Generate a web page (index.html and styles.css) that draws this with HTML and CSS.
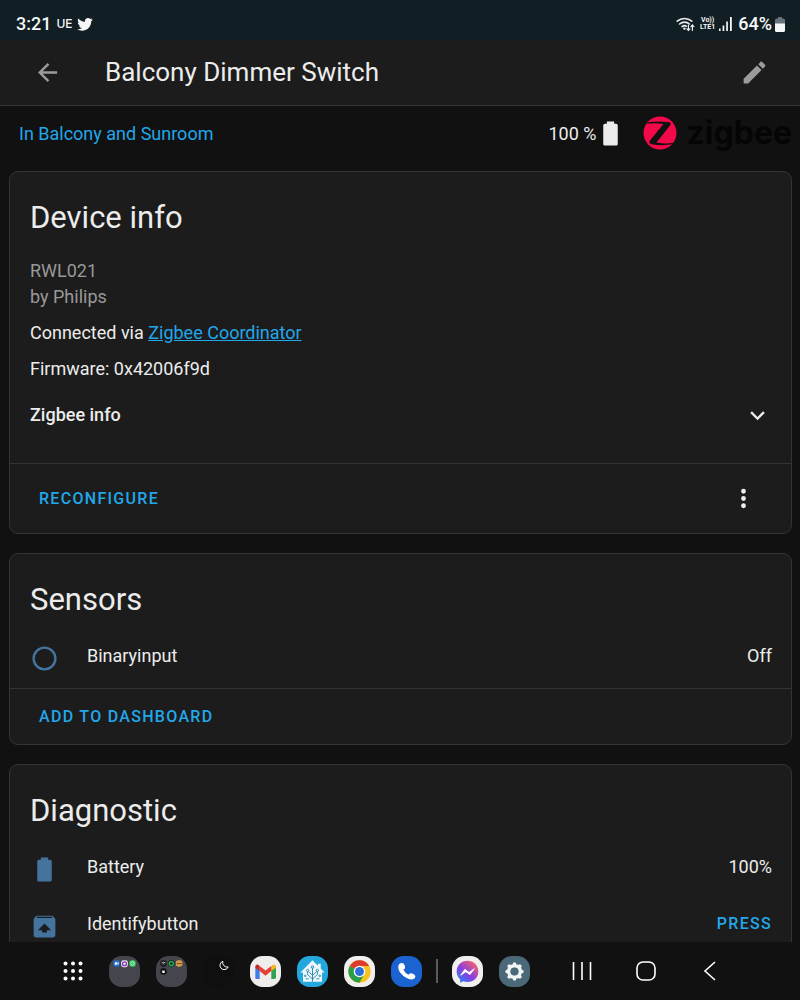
FILE: index.html
```
<!DOCTYPE html>
<html lang="en">

<head>
  <meta charset="UTF-8">
  <meta name="viewport" content="width=device-width, initial-scale=1.0">
  <title>Balcony Dimmer Switch</title>
  <link rel="stylesheet" href="styles.css">
</head>

<body>
  <!-- Status bar -->
  <div class="status-bar">
    <span class="clock">3:21</span>
    <span class="status-tag">UE</span>
    <svg class="bird" viewBox="0 0 24 24"><path d="M22.46 6c-.77.35-1.6.58-2.46.69.88-.53 1.56-1.37 1.88-2.38-.83.5-1.75.85-2.72 1.05C18.37 4.5 17.26 4 16 4c-2.35 0-4.27 1.92-4.27 4.29 0 .34.04.67.11.98C8.28 9.09 5.11 7.38 3 4.79c-.37.63-.58 1.37-.58 2.15 0 1.49.75 2.81 1.91 3.56-.71 0-1.37-.2-1.95-.5v.03c0 2.08 1.48 3.82 3.44 4.21a4.22 4.22 0 0 1-1.93.07 4.28 4.28 0 0 0 4 2.98 8.52 8.52 0 0 1-5.33 1.84c-.34 0-.68-.02-1.02-.06C3.44 20.29 5.7 21 8.12 21 16 21 20.33 14.46 20.33 8.79c0-.19 0-.37-.01-.56.84-.6 1.56-1.36 2.14-2.23z"/></svg>
    <div class="status-right">
      <svg class="wifi" viewBox="0 0 19 16">
        <g fill="none" stroke="#e9edee" stroke-width="1.6" stroke-linecap="round">
          <path d="M1.2 5.2a11 11 0 0 1 14.6 0M3.6 8a7.4 7.4 0 0 1 9.8 0M6 10.6a4 4 0 0 1 4.4-.4"/>
          <path d="M12.4 9v5M10.9 12.8l1.5 1.6 1.5-1.6M16.4 14.4V9.2M14.9 10.6l1.5-1.6 1.5 1.6" stroke-width="1.2"/>
        </g>
        <circle cx="8.4" cy="12.6" r="1.2"/>
      </svg>
      <span class="lte"><span>Vo))</span><span>LTE1</span></span>
      <svg class="signal" viewBox="0 0 13 14"><path d="M0 11.5h1.6V14H0zM3.6 8.5h1.7V14H3.6zM7.2 4.5h1.7V14H7.2zM11 0h1.8v14H11z"/></svg>
      <span class="percent">64%</span>
      <svg class="phone-battery" viewBox="0 0 10 15"><path d="M3 0h4v1.5h1.5A1.5 1.5 0 0 1 10 3v4H0V3a1.5 1.5 0 0 1 1.5-1.5H3z" fill="#68747a"/><path d="M0 6.5h10v7A1.5 1.5 0 0 1 8.5 15h-7A1.5 1.5 0 0 1 0 13.5z"/></svg>
    </div>
  </div>

  <header class="toolbar">
    <button class="icon-button" aria-label="Back"><svg class="icon" viewBox="0 0 24 24"><path d="M20,11V13H8L13.5,18.5L12.08,19.92L4.16,12L12.08,4.08L13.5,5.5L8,11H20Z"/></svg></button>
    <h1>Balcony Dimmer Switch</h1>
    <button class="icon-button" aria-label="Edit"><svg class="icon" viewBox="0 0 24 24"><path d="M20.71,7.04C21.1,6.65 21.1,6 20.71,5.63L18.37,3.29C18,2.9 17.35,2.9 16.96,3.29L15.12,5.12L18.87,8.87M3,17.25V21H6.75L17.81,9.93L14.06,6.18L3,17.25Z"/></svg></button>
  </header>

  <main>
    <div class="device-row">
      <a class="area-link" href="#area">In Balcony and Sunroom</a>
      <span class="battery-level">100 %
        <svg class="icon" viewBox="0 0 24 24"><path d="M16.67,4H15V2H9V4H7.33A1.33,1.33 0 0,0 6,5.33V20.67C6,21.4 6.6,22 7.33,22H16.67A1.33,1.33 0 0,0 18,20.67V5.33C18,4.6 17.4,4 16.67,4Z"/></svg>
      </span>
      <div class="brand">
        <svg class="brand-mark" viewBox="0 0 34 34">
          <circle cx="17" cy="17" r="16.5" fill="#f2094a"/>
          <path d="M5 6.3Q15 4.8 26.5 6.3Q28.5 7 27 9.5L13.500 26.5Q22 28.2 31 26.8L29.5 28.3Q19 30 8.5 28.2Q5.2 27 7 24.5L20.5 8Q12 6.5 3.500 7.7Z" fill="#111"/>
        </svg>
        <span class="brand-name">zigbee</span>
      </div>
    </div>

    <!-- Device info -->
    <section class="card">
      <h2>Device info</h2>
      <div class="info">
        <p class="model">RWL021<br>by Philips</p>
        <p>Connected via <a href="#coordinator">Zigbee Coordinator</a></p>
        <p>Firmware: 0x42006f9d</p>
      </div>
      <button class="expander" aria-expanded="false">
        Zigbee info
        <svg class="icon" viewBox="0 0 24 24"><path d="M7.41,8.58L12,13.17L16.59,8.58L18,10L12,16L6,10L7.41,8.58Z"/></svg>
      </button>
      <div class="actions actions-tall">
        <button class="text-button">RECONFIGURE</button>
        <button class="icon-button" aria-label="More"><svg class="icon" viewBox="0 0 24 24"><path d="M12,16A2,2 0 0,1 14,18A2,2 0 0,1 12,20A2,2 0 0,1 10,18A2,2 0 0,1 12,16M12,10A2,2 0 0,1 14,12A2,2 0 0,1 12,14A2,2 0 0,1 10,12A2,2 0 0,1 12,10M12,4A2,2 0 0,1 14,6A2,2 0 0,1 12,8A2,2 0 0,1 10,6A2,2 0 0,1 12,4Z"/></svg></button>
      </div>
    </section>

    <!-- Sensors -->
    <section class="card">
      <h2>Sensors</h2>
      <div class="entity">
        <svg class="icon" viewBox="0 0 24 24"><path d="M12,20A8,8 0 0,1 4,12A8,8 0 0,1 12,4A8,8 0 0,1 20,12A8,8 0 0,1 12,20M12,2A10,10 0 0,0 2,12A10,10 0 0,0 12,22A10,10 0 0,0 22,12A10,10 0 0,0 12,2Z"/></svg>
        <span class="name">Binaryinput</span>
        <span>Off</span>
      </div>
      <div class="actions">
        <button class="text-button">ADD TO DASHBOARD</button>
      </div>
    </section>

    <!-- Diagnostic -->
    <section class="card">
      <h2>Diagnostic</h2>
      <div class="entity">
        <svg class="icon" viewBox="0 0 24 24"><path d="M16.67,4H15V2H9V4H7.33A1.33,1.33 0 0,0 6,5.33V20.67C6,21.4 6.6,22 7.33,22H16.67A1.33,1.33 0 0,0 18,20.67V5.33C18,4.6 17.4,4 16.67,4Z"/></svg>
        <span class="name">Battery</span>
        <span>100%</span>
      </div>
      <div class="entity">
        <svg class="icon" viewBox="0 0 24 24"><path d="M20.55 5.22l-1.39-1.68C18.88 3.21 18.47 3 18 3H6c-.47 0-.88.21-1.15.55L3.46 5.22C3.17 5.57 3 6.01 3 6.5V19c0 1.1.89 2 2 2h14c1.1 0 2-.9 2-2V6.5c0-.49-.17-.93-.45-1.28zM12 9.5l5.5 5.5H14v2h-4v-2H6.5L12 9.5zM5.12 5l.82-1h12l.93 1H5.12z"/></svg>
        <span class="name">Identifybutton</span>
        <button class="text-button">PRESS</button>
      </div>
    </section>
  </main>

  <!-- Taskbar -->
  <nav class="taskbar">
    <button class="all-apps" aria-label="All apps">
      <svg viewBox="0 0 20 20"><g fill="#fff"><circle cx="2.5" cy="2.5" r="2"/><circle cx="10" cy="2.5" r="2"/><circle cx="17.5" cy="2.5" r="2"/><circle cx="2.5" cy="10" r="2"/><circle cx="10" cy="10" r="2"/><circle cx="17.5" cy="10" r="2"/><circle cx="2.5" cy="17.5" r="2"/><circle cx="10" cy="17.5" r="2"/><circle cx="17.5" cy="17.5" r="2"/></g></svg>
    </button>
    <div class="apps">
      <button class="app" aria-label="Folder">
        <svg viewBox="0 0 32 32">
          <rect width="32" height="32" rx="13" fill="#45454d"/>
          <rect x="4.5" y="4.5" width="6.5" height="6.5" rx="2" fill="#1f6fd0"/><path d="M6 6.5h2.5v2.500H6zM9 7l1-.6v2.500L9 8.4z" fill="#fff"/>
          <rect x="12.5" y="4.5" width="7" height="7" rx="2.5" fill="#f0eaf5"/><circle cx="16" cy="8" r="2" fill="none" stroke="#8434b8" stroke-width="1.4"/>
          <rect x="21" y="4.5" width="6.5" height="6.5" rx="2" fill="#35c95c"/><circle cx="24.3" cy="7.7" r="1.8" fill="none" stroke="#d4f7dc" stroke-width=".8"/>
        </svg>
      </button>
      <button class="app" aria-label="Folder">
        <svg viewBox="0 0 32 32">
          <rect width="32" height="32" rx="13" fill="#45454d"/>
          <rect x="4.5" y="4.5" width="6.5" height="6.5" rx="2.5" fill="#18181b"/><path d="M5.8 7q2-1.3 4 0M6.8 8.4q1-.7 2 0" fill="none" stroke="#ddd" stroke-width=".8"/>
          <rect x="12.5" y="4.5" width="6.5" height="6.5" rx="2.5" fill="#10281a"/><circle cx="15.8" cy="7.8" r="2.1" fill="none" stroke="#20bd58" stroke-width="1.3"/>
          <rect x="20.5" y="4.5" width="6.8" height="6.5" rx="2.5" fill="#d59a4a"/><path d="M21.5 7.8h5" stroke="#6c4b25" stroke-width="1"/>
          <rect x="4.5" y="12.7" width="6.5" height="6.5" rx="2.5" fill="#101012"/><path d="M6.5 14.5l1.2 1 1.2-1v3H6.5z" fill="#fff"/>
        </svg>
      </button>
      <button class="app" aria-label="Night mode">
        <svg viewBox="0 0 32 32"><rect width="32" height="32" rx="13" fill="#0f0f0f"/><path d="M20.5 5.5A4.4 4.4 0 1 0 26 11.3A4.6 4.6 0 0 1 20.5 5.5Z" fill="none" stroke="#fff"/></svg>
      </button>
      <button class="app" aria-label="Mail">
        <svg viewBox="0 0 32 32">
          <rect width="32" height="32" rx="13" fill="#efedec"/>
          <path d="M5.5 11v11.7q0 1 1 1H10V14z" fill="#3f7de8"/>
          <path d="M22 14v9.7h3a1.8 1.8 0 0 0 1.8-1.8V11z" fill="#2fa14f"/>
          <path d="M22 10.8l1.3-1.4q1.7-1.3 3 .2.5.6.5 1.4v1L22 15.6z" fill="#f4b81c"/>
          <path d="M5.5 12v-1q0-.8.5-1.4 1.3-1.5 3-.2L10 10.5v5.1z" fill="#bd2a25"/>
          <path d="M10 10.2l6 4.7 6-4.7v5.4l-6 4.7-6-4.7z" fill="#e34133"/>
        </svg>
      </button>
      <button class="app" aria-label="Home Assistant">
        <svg viewBox="0 0 32 32">
          <rect width="32" height="32" rx="13" fill="#23a7dc"/>
          <path d="M16 4.5L21.5 10V8h3v5l4 4h-2.7v9.500H6.200V17H3.5z" fill="#eef7fb"/>
          <g fill="none" stroke="#2a86ad" stroke-width="1"><path d="M16 26.5V12M16 24l-5-5v-3M16 20l-3.5-3.5M16 24l5-5v-3M16 20l3.5-3.5M12 23.5H9M20 23.5h3"/><circle cx="16" cy="11.5" r="1.3"/><circle cx="11" cy="15" r="1.2"/><circle cx="21" cy="15" r="1.2"/><circle cx="8.5" cy="20.5" r=".8"/><circle cx="23.5" cy="20.5" r=".8"/></g>
        </svg>
      </button>
      <button class="app" aria-label="Browser">
        <svg viewBox="0 0 32 32">
          <rect width="32" height="32" rx="13" fill="#f1efed"/>
          <circle cx="16" cy="16" r="11.5" fill="#f8c31c"/>
          <path d="M16 16L6 10.3A11.5 11.5 0 0 0 16 27.5L21 18.5z" fill="#2b9c4a"/>
          <path d="M16 16L6 10.3A11.5 11.5 0 0 1 26 10.3H16z" fill="#dc3b2e"/>
          <circle cx="16" cy="16" r="6" fill="#fff"/><circle cx="16" cy="16" r="4.6" fill="#2a6fdb"/>
        </svg>
      </button>
      <button class="app" aria-label="Phone">
        <svg viewBox="0 0 32 32"><rect width="32" height="32" rx="13" fill="#1b63d1"/><path d="M8.5 8.3q2.5-2 4.7-.2 1.6 2 1.3 4.2-.5 1.2-1.8 1.7 1.8 3.8 5.4 5.4.9-1.3 2-1.7 3.2 0 4.4 1.8 1.5 2.3-.8 4-3.2 1.9-8-1Q8.6 18.5 7.6 13q-.5-3.2.9-4.7z" fill="#fff"/></svg>
      </button>
    </div>
    <span class="divider"></span>
    <div class="apps">
      <button class="app" aria-label="Messenger">
        <svg viewBox="0 0 32 32">
          <defs><linearGradient id="chat" x1="0" y1="1" x2=".8" y2="0"><stop offset="0" stop-color="#168cff"/><stop offset=".5" stop-color="#8a3ee0"/><stop offset="1" stop-color="#fb6368"/></linearGradient></defs>
          <rect width="32" height="32" rx="13" fill="#f1eeee"/>
          <path d="M16 5C9.5 5 4.8 9.8 4.8 16c0 3.4 1.3 6 3.6 7.9V27.5l3.2-1.4c1.4.5 2.8.7 4.4.7 6.5 0 11.2-4.7 11.2-10.8C27.2 9.8 22.5 5 16 5z" fill="url(#chat)"/>
          <path d="M9 19.8l4.3-6 4.3 3.2 5.4-3.8-4.5 6-4.2-3z" fill="#fff" stroke="#fff"/>
        </svg>
      </button>
      <button class="app" aria-label="Settings">
        <svg viewBox="0 0 32 32"><rect width="32" height="32" rx="13" fill="#4b6878"/><circle cx="16" cy="16" r="6" fill="none" stroke="#f2f5f6" stroke-width="3.600"/><path d="M16 8.4v.1M16 23.5v.1M8.4 16h.1M23.500 16h.1M10.600 10.600l.1.1M21.300 21.300l.1.1M10.600 21.400l.1-.1M21.300 10.700l.1-.1" stroke="#f2f5f6" stroke-width="3.800" stroke-linecap="round"/><circle cx="16" cy="16" r="3.900" fill="#4b6878"/></svg>
      </button>
    </div>
    <div class="system-nav">
      <button aria-label="Recents"><svg viewBox="0 0 24 24"><path d="M3.500 3v18M12 3v18M20.500 3v18"/></svg></button>
      <button aria-label="Home"><svg viewBox="0 0 24 24"><rect x="3" y="3" width="18" height="18" rx="6"/></svg></button>
      <button aria-label="Back"><svg viewBox="0 0 24 24"><path d="M17 3L7 12l10 9"/></svg></button>
    </div>
  </nav>
</body>

</html>
```
FILE: styles.css
```
* {
  box-sizing: border-box;
}

body {
  height: 100vh;
  margin: 0;
  display: flex;
  flex-direction: column;
  font-family: Roboto, sans-serif;
  font-size: 18px;
  line-height: 26px;
  color: #ececec;
  background-color: #111111;
}

h1,
h2,
p {
  margin: 0;
  font-weight: 400;
}

a {
  color: #22a7ea;
}

button {
  padding: 0;
  border: none;
  background: none;
  color: inherit;
  font: inherit;
  cursor: pointer;
}

svg {
  display: block;
  flex-shrink: 0;
}

.icon {
  width: 29px;
  height: 29px;
  fill: currentColor;
}

/* Status bar */
.status-bar {
  flex-shrink: 0;
  height: 40px;
  padding: 8px 15px 0 16px;
  display: flex;
  align-items: center;
  background-color: #111e23;
  color: #f4f6f7;
  fill: #f4f6f7;
}

.clock,
.percent {
  font-size: 18px;
  font-weight: 500;
}

.status-tag {
  margin: 0 3px 0 5px;
  font-family: Inter, sans-serif;
  font-size: 12px;
  font-weight: 500;
}

.bird {
  width: 18px;
  height: 18px;
}

.status-right {
  margin-left: auto;
  display: flex;
  align-items: center;
}

.wifi {
  width: 19px;
  height: 16px;
  margin-right: 5px;
}

.lte {
  display: flex;
  flex-direction: column;
  align-items: center;
  font-size: 7px;
  font-weight: 700;
  line-height: 7px;
}

.signal {
  width: 13px;
  height: 14px;
  margin: 0 6px 0 4px;
}

.phone-battery {
  width: 10px;
  height: 15px;
  margin-left: 3px;
}

/* Toolbar */
.toolbar {
  flex-shrink: 0;
  height: 66px;
  padding: 0 31px 0 33px;
  display: flex;
  align-items: center;
  background-color: #1c1c1c;
  border-bottom: 1px solid #343434;
}

.toolbar h1 {
  flex: 1;
  margin-left: 43px;
  padding-bottom: 2px;
  font-size: 26px;
  line-height: 32px;
}

.toolbar .icon-button {
  color: #9b9b9b;
}

/* Content */
main {
  flex: 1;
  min-height: 0;
  overflow: hidden;
  padding: 0 8px 0 9px;
}

.device-row {
  height: 65px;
  padding: 0 0 10px 10px;
  display: flex;
  align-items: center;
}

.area-link {
  flex: 1;
  text-decoration: none;
}

.battery-level {
  display: flex;
  align-items: center;
}

.brand {
  margin-left: 18px;
  padding-bottom: 2px;
  display: flex;
  align-items: center;
  gap: 9px;
}

.brand-mark {
  width: 34px;
  height: 34px;
}

.brand-name {
  font-family: Inter, sans-serif;
  font-size: 32px;
  font-weight: 700;
  color: #050505;
}

.card {
  margin-bottom: 19px;
  padding-top: 22px;
  background-color: #1c1c1c;
  border: 1px solid #343434;
  border-radius: 9px;
}

.card h2 {
  padding: 0 20px;
  margin-bottom: 3px;
  font-size: 31px;
  line-height: 48px;
}

.info {
  padding: 13px 20px 0;
  display: flex;
  flex-direction: column;
  gap: 10px;
}

.model {
  color: #999999;
}

.expander {
  width: 100%;
  height: 48px;
  margin: 9px 0 24px;
  padding: 0 19px 0 20px;
  display: flex;
  align-items: center;
  justify-content: space-between;
  font-weight: 500;
}

.actions {
  height: 56px;
  padding: 0 33px 0 29px;
  display: flex;
  align-items: center;
  justify-content: space-between;
  border-top: 1px solid #343434;
}

.actions-tall {
  height: 70px;
}

.text-button {
  font-size: 16px;
  font-weight: 500;
  letter-spacing: 1.3px;
  color: #22a7ea;
}

.entity {
  height: 57px;
  padding: 0 19px 0 20px;
  display: flex;
  align-items: center;
}

.entity .icon {
  margin-top: 6px;
  color: #44739e;
}

.entity .name {
  flex: 1;
  margin-left: 28px;
}

.entity + .actions {
  margin-top: 4px;
}

/* Taskbar */
.taskbar {
  flex-shrink: 0;
  height: 58px;
  padding-left: 63px;
  display: flex;
  align-items: center;
}

.all-apps svg {
  width: 20px;
  height: 20px;
}

.apps {
  margin-left: 26px;
  display: flex;
  gap: 16px;
}

.app svg {
  width: 31px;
  height: 31px;
}

.divider {
  width: 2px;
  height: 24px;
  margin-left: 14px;
  background-color: #5c5c5f;
}

.divider + .apps {
  margin-left: 14px;
}

.system-nav {
  margin-left: 40px;
  display: flex;
  gap: 40px;
}

.system-nav svg {
  width: 24px;
  height: 24px;
  fill: none;
  stroke: #ffffff;
  stroke-width: 1.6;
}
```
